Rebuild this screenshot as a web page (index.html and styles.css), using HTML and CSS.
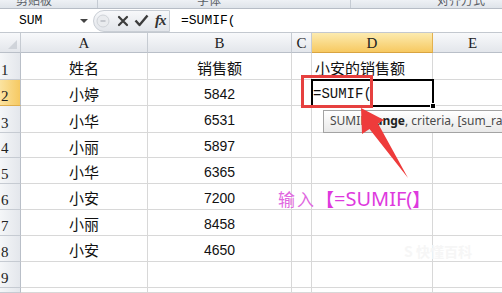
FILE: index.html
```html
<!DOCTYPE html>
<html lang="zh-CN">
<head>
    <meta charset="UTF-8">
    <title>SUMIF</title>
    <link rel="stylesheet" href="styles.css">
</head>
<body>
    <div class="ribbon">
        <div class="grp g1"><span>剪贴板</span></div>
        <div class="grp g2"><span>字体</span></div>
        <div class="grp g3"><span>对齐方式</span></div>
    </div>
    <div class="fbar">
        <div class="namebox"><span>SUM</span><i class="drop"></i></div>
        <div class="btns">
            <svg class="expand" width="14" height="14" viewBox="0 0 14 14">
                <circle cx="7" cy="7" r="6" fill="#e9ebee" stroke="#cfd3d8"/>
                <path d="M4.5 7h5" stroke="#b9bdc3" stroke-width="1.5"/>
            </svg>
            <svg class="cancel" width="12" height="12" viewBox="0 0 12 12">
                <path d="M2 2l8 8M10 2l-8 8" stroke="#3c3c3c" stroke-width="2.2" stroke-linecap="round"/>
            </svg>
            <svg class="enter" width="15" height="13" viewBox="0 0 15 13">
                <path d="M1.5 6.5l4 4.5L13.5 1.5" fill="none" stroke="#3c3c3c" stroke-width="2.4" stroke-linejoin="round"/>
            </svg>
            <span class="fx">fx</span>
        </div>
        <div class="formula">=SUMIF(</div>
    </div>

    <div class="wrap">
        <div class="sheet">
            <div class="hd corner"><i></i></div>
            <div class="hd">A</div>
            <div class="hd">B</div>
            <div class="hd">C</div>
            <div class="hd on">D</div>
            <div class="hd">E</div>

            <div class="rh">1</div><div class="c mid">姓名</div><div class="c mid">销售额</div><div class="c"></div><div class="c left">小安的销售额</div><div class="c"></div>
            <div class="rh on">2</div><div class="c mid">小婷</div><div class="c num">5842</div><div class="c"></div><div class="c code">=SUMIF(</div><div class="c"></div>
            <div class="rh">3</div><div class="c mid">小华</div><div class="c num">6531</div><div class="c"></div><div class="c"></div><div class="c"></div>
            <div class="rh">4</div><div class="c mid">小丽</div><div class="c num">5897</div><div class="c"></div><div class="c"></div><div class="c"></div>
            <div class="rh">5</div><div class="c mid">小华</div><div class="c num">6365</div><div class="c"></div><div class="c"></div><div class="c"></div>
            <div class="rh">6</div><div class="c mid">小安</div><div class="c num">7200</div><div class="c"></div><div class="c"></div><div class="c"></div>
            <div class="rh">7</div><div class="c mid">小丽</div><div class="c num">8458</div><div class="c"></div><div class="c"></div><div class="c"></div>
            <div class="rh">8</div><div class="c mid">小安</div><div class="c num">4650</div><div class="c"></div><div class="c"></div><div class="c"></div>
            <div class="rh">9</div><div class="c"></div><div class="c"></div><div class="c"></div><div class="c"></div><div class="c"></div>
            <div class="rh"></div><div class="c"></div><div class="c"></div><div class="c"></div><div class="c"></div><div class="c"></div>
        </div>

        <!-- 选中单元格 -->
        <div class="active"><i class="handle"></i></div>
        <!-- 函数提示 -->
        <div class="tip">SUMIF(<b>range</b>, criteria, [sum_range])</div>
        <!-- 标注 -->
        <div class="mark"></div>
        <svg class="arrow" width="502" height="293" viewBox="0 0 502 293">
            <polygon points="361,108 384,120 378,123.5 408,178 369.5,129 362,134" fill="#ee3b3b"/>
        </svg>
        <div class="note"><span class="cn">输入</span><span class="br">【</span><span class="en">=SUMIF(</span><span class="br">】</span></div>
        <div class="wm">S 快懂百科</div>
    </div>
</body>
</html>
```

FILE: styles.css
```css
*{
    margin:0;
    padding:0;
    box-sizing: border-box;
}
body{
    width: 502px;
    height: 293px;
    overflow: hidden;
    background: #fff;
    font-family: "Noto Sans CJK SC", "Noto Sans", sans-serif;
}
.ribbon{
    display: flex;
    height: 9px;
    overflow: hidden;
    background: linear-gradient(#eef1f5, #dfe4ea);
    border-bottom: 1px solid #b7bdc6;
}
.grp{
    font-size: 12px;
    line-height: 12px;
    color: #5a5f66;
    border-right: 1px solid #c5cbd3;
}
.grp span{
    display: block;
    margin-top: -6px;
}
.g1{
    width: 98px;
    padding-left: 16px;
}
.g2{
    width: 253px;
    padding-left: 99px;
}
.g3{
    flex: 1;
    padding-left: 86px;
    border-right: 0;
}
.fbar{
    display: flex;
    align-items: center;
    height: 24px;
    background: #fff;
    border-bottom: 1px solid #c3c8cf;
    font-family: "Liberation Mono", "DejaVu Sans Mono", monospace;
    font-size: 13px;
}
.namebox{
    position: relative;
    width: 93px;
    height: 100%;
    padding-left: 19px;
    line-height: 23px;
}
.drop{
    position: absolute;
    left: 80px;
    top: 10px;
    border-top: 4px solid #444;
    border-left: 4px solid transparent;
    border-right: 4px solid transparent;
}
.btns{
    display: flex;
    align-items: center;
    width: 77px;
    height: 22px;
    padding-left: 2px;
    border: 1px solid #c9ced5;
    border-radius: 11px 0 0 11px;
    background: linear-gradient(#f7f8fa, #e2e5ea);
}
.expand{
    margin-right: 7px;
}
.cancel{
    margin-right: 5px;
}
.enter{
    margin-right: 6px;
}
.fx{
    font-family: "Liberation Serif", serif;
    font-style: italic;
    font-weight: bold;
    font-size: 15px;
    color: #333;
    letter-spacing: -1px;
}
.formula{
    padding-left: 11px;
}
.wrap{
    position: relative;
}
.sheet{
    display: grid;
    grid-template-columns: 21px 127px 144px 20px 121px 80px;
    grid-template-rows: 20px 27px 26px 27px 25px 26px 26px 26px 26px 26px 5px;
}
.hd{
    display: flex;
    align-items: flex-end;
    justify-content: center;
    padding-bottom: 1px;
    background: linear-gradient(#f8f9fb, #e3e6eb);
    border-right: 1px solid #c6cbd2;
    border-bottom: 1px solid #b9bfc8;
    font-family: "Liberation Serif", serif;
    font-size: 15px;
    line-height: 16px;
    color: #222;
}
.hd.on{
    background: linear-gradient(#fcebb0, #f7c961);
    border-right-color: #e3b14f;
    border-bottom-color: #d9a441;
}
.corner{
    position: relative;
}
.corner i{
    position: absolute;
    right: 3px;
    bottom: 3px;
    border-bottom: 9px solid #d0d4da;
    border-left: 9px solid transparent;
}
.rh{
    display: flex;
    align-items: flex-end;
    padding: 0 0 0 1px;
    background: linear-gradient(90deg, #f4f6f8, #e4e7ec);
    border-right: 1px solid #b9bfc8;
    border-bottom: 1px solid #c6cbd2;
    font-family: "Liberation Serif", serif;
    font-size: 15px;
    line-height: 17px;
    color: #222;
}
.rh.on{
    background: linear-gradient(90deg, #fbe3a0, #f6c962);
    border-bottom-color: #dfae4c;
}
.c{
    display: flex;
    align-items: center;
    padding-top: 2px;
    border-right: 1px solid #d8d8d8;
    border-bottom: 1px solid #d8d8d8;
    font-size: 15px;
    color: #111;
}
.mid{
    justify-content: center;
}
.num{
    justify-content: center;
    font-family: "Liberation Sans", sans-serif;
    font-size: 14px;
}
.left{
    padding-left: 3px;
}
.code{
    padding-left: 1px;
    font-family: "Liberation Mono", "DejaVu Sans Mono", monospace;
    font-size: 14px;
}
.active{
    position: absolute;
    left: 311px;
    top: 46px;
    width: 123px;
    height: 28px;
    border: 2px solid #000;
}
.handle{
    position: absolute;
    right: -4px;
    bottom: -4px;
    width: 6px;
    height: 6px;
    background: #000;
    border: 1px solid #fff;
}
.tip{
    position: absolute;
    left: 323px;
    top: 77px;
    width: 190px;
    height: 23px;
    padding-left: 6px;
    background: linear-gradient(#ffffff, #e9e9e9);
    border: 1px solid #a3a3a3;
    font-family: "Noto Sans", sans-serif;
    font-size: 12px;
    line-height: 20px;
    color: #4a4a4a;
    white-space: nowrap;
    overflow: hidden;
}
.tip b{
    color: #222;
}
.mark{
    position: absolute;
    left: 301px;
    top: 42px;
    width: 72px;
    height: 33px;
    border: 3px solid #e6403f;
}
.arrow{
    position: absolute;
    left: 0;
    top: -33px;
    pointer-events: none;
}
.note{
    position: absolute;
    left: 278px;
    top: 152px;
    display: flex;
    align-items: center;
    height: 26px;
    color: #de3ade;
    white-space: nowrap;
}
.cn{
    font-size: 17px;
    letter-spacing: 2px;
    color: #e067e0;
}
.br{
    font-size: 18px;
    font-weight: bold;
}
.en{
    font-family: "Noto Sans", sans-serif;
    font-size: 20px;
}
.wm{
    position: absolute;
    left: 404px;
    top: 208px;
    font-size: 14px;
    font-weight: bold;
    color: #f6f6f6;
}
```
